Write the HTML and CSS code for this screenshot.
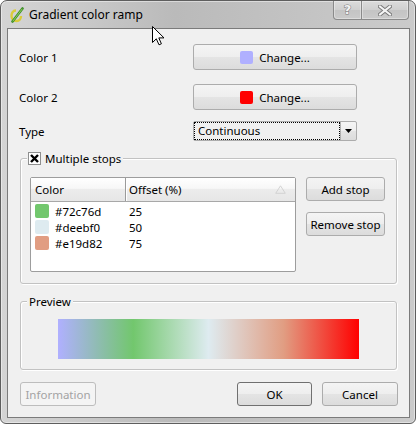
FILE: index.html
```html
<!DOCTYPE html>
<html>
<head>
<meta charset="utf-8">
<link rel="stylesheet" href="styles.css">
</head>
<body>
<div class="window">
  <div class="titlebar">
    <svg class="appicon" width="14" height="16" viewBox="0 0 14 16">
      <path d="M6 3.5 C2.5 3.5 1.5 6.5 1.5 9 C1.5 12 3.5 14 6.5 14 C9.5 14 11 11.5 11 9" fill="none" stroke="#d9cc3a" stroke-width="2.4"/>
      <path d="M2.5 14.5 L12.5 1.5" stroke="#3f8f2a" stroke-width="2.6" stroke-linecap="round"/>
      <path d="M3 14 L12 2.2" stroke="#8fd25a" stroke-width="1" stroke-linecap="round"/>
    </svg>
    <span class="title">Gradient color ramp</span>
    <div class="caption">
      <div class="cbtn help">?</div>
      <div class="cbtn close">
        <svg width="14" height="11" viewBox="0 0 14 11">
          <path d="M2 1.5 L12 9.5 M12 1.5 L2 9.5" stroke="#7a7a7a" stroke-width="4" stroke-linecap="square"/>
          <path d="M2 1.5 L12 9.5 M12 1.5 L2 9.5" stroke="#f4f4f4" stroke-width="2" stroke-linecap="square"/>
        </svg>
      </div>
    </div>
  </div>

  <div class="client">
    <div class="form-row">
      <span class="label">Color 1</span>
      <button class="btn change"><span class="swatch" style="background:#b0b0ff"></span>Change...</button>
    </div>
    <div class="form-row second">
      <span class="label">Color 2</span>
      <button class="btn change"><span class="swatch" style="background:#ff0000"></span>Change...</button>
    </div>
    <div class="form-row third">
      <span class="label">Type</span>
      <div class="combo">
        <span class="combo-text">Continuous</span>
        <span class="combo-arrow">
          <svg width="7" height="4" viewBox="0 0 7 4"><path d="M0 0 H7 L3.5 4 Z" fill="#000"/></svg>
        </span>
      </div>
    </div>

    <div class="group stops">
      <div class="group-title">
        <svg class="checkbox" width="13" height="13" viewBox="0 0 13 13">
          <rect x="0.5" y="0.5" width="12" height="12" fill="#fff" stroke="#8e8f8f"/>
          <path d="M3 3 L10 10 M10 3 L3 10" stroke="#000" stroke-width="2.4"/>
        </svg>
        <span>Multiple stops</span>
      </div>
      <div class="group-body">
        <div class="table">
          <div class="thead">
            <div class="th th1">Color</div>
            <div class="th th2">Offset (%)
              <svg class="sort" width="11" height="9" viewBox="0 0 11 9"><path d="M5.5 0.8 L10.3 8.3 H0.7 Z" fill="none" stroke="#d2d2d2"/></svg>
            </div>
          </div>
          <div class="tbody">
            <div class="tr"><div class="td td1"><span class="cell-swatch" style="background:#72c76d"></span>#72c76d</div><div class="td td2">25</div></div>
            <div class="tr"><div class="td td1"><span class="cell-swatch" style="background:#deebf0"></span>#deebf0</div><div class="td td2">50</div></div>
            <div class="tr"><div class="td td1"><span class="cell-swatch" style="background:#e19d82"></span>#e19d82</div><div class="td td2">75</div></div>
          </div>
        </div>
        <div class="side-btns">
          <button class="btn side">Add stop</button>
          <button class="btn side">Remove stop</button>
        </div>
      </div>
    </div>

    <div class="group preview">
      <div class="group-title"><span class="ptitle">Preview</span></div>
      <div class="ramp"></div>
    </div>

    <div class="footer">
      <button class="btn info" disabled>Information</button>
      <button class="btn ok">OK</button>
      <button class="btn cancel">Cancel</button>
    </div>
  </div>

  <svg class="cursor" width="13" height="20" viewBox="0 0 13 20">
    <path d="M0.5 0.5 L0.5 16.5 L4.3 12.8 L7 18.8 L9.4 17.8 L6.8 11.9 L12 11.9 Z" fill="#fff" stroke="#000" stroke-width="1" stroke-linejoin="miter"/>
  </svg>
</div>
</body>
</html>
```

FILE: styles.css
```css
* { box-sizing: border-box; }

body {
  margin: 0;
  background: #ffffff;
  font-family: "Noto Sans", "Open Sans", sans-serif;
  font-size: 11.5px;
  color: #000;
}

.window {
  position: relative;
  width: 416px;
  height: 424px;
  border: 1px solid #5e5e5e;
  border-radius: 7px 7px 6px 6px;
  background: linear-gradient(to right, #d4d4d4 0%, #cacaca 18%, #bababa 42%, #c1c1c1 65%, #cbcbcb 100%);
  box-shadow: inset 0 0 0 1px rgba(255,255,255,0.45);
  display: flex;
  flex-direction: column;
  overflow: hidden;
}

.titlebar {
  height: 27px;
  display: flex;
  align-items: flex-start;
}

.appicon {
  margin: 6px 0 0 9px;
  flex: none;
}

.title {
  margin: 5px 0 0 5px;
  font-size: 12px;
  line-height: 18px;
  color: #000;
}

.caption {
  margin-left: auto;
  margin-right: 6px;
  display: flex;
}

.cbtn {
  height: 19px;
  border: 1px solid #8a8a8a;
  border-top: none;
  background: linear-gradient(#dcdcdc, #cfcfcf 50%, #c4c4c4 51%, #cacaca);
  box-shadow: inset 0 0 0 1px rgba(255,255,255,0.35);
  display: flex;
  align-items: center;
  justify-content: center;
}

.help {
  width: 29px;
  border-radius: 0 0 0 4px;
  font-family: "DejaVu Sans", sans-serif;
  font-weight: bold;
  font-size: 13px;
  color: #f2f2f2;
  -webkit-text-stroke: 1px #7a7a7a;
  paint-order: stroke fill;
  line-height: 16px;
}

.close {
  width: 47px;
  border-left: none;
  border-radius: 0 0 4px 0;
}

.client {
  margin: 0 5px 5px 6px;
  height: 390px;
  border: 1px solid #7b7b7b;
  background: #f0f0f0;
  padding: 15px 0 11px 11px;
  display: flex;
  flex-direction: column;
}

.form-row {
  display: flex;
  align-items: center;
  height: 26px;
}

.form-row.second { margin-top: 14px; }
.form-row.third { margin-top: 11px; height: 20px; }

.label {
  width: 174px;
}

.btn {
  font: inherit;
  color: #000;
  border: 1px solid #acacac;
  border-radius: 3px;
  background: linear-gradient(#f4f4f4 0%, #eeeeee 50%, #e4e4e4 51%, #dcdcdc 100%);
  padding: 0;
  display: flex;
  align-items: center;
  justify-content: center;
}

.change {
  width: 164px;
  height: 26px;
}

.swatch {
  width: 13px;
  height: 13px;
  border-radius: 2px;
  margin-right: 6px;
}

.combo {
  width: 164px;
  height: 20px;
  border: 1px solid #acacac;
  border-radius: 2px;
  background: linear-gradient(#f4f4f4 0%, #eeeeee 50%, #e4e4e4 51%, #dcdcdc 100%);
  display: flex;
}

.combo-text {
  flex: 1;
  border: 1px dotted #000;
  padding-left: 3px;
  line-height: 16px;
  background: #f0f0f0;
}

.combo-arrow {
  width: 16px;
  border-left: 1px solid #b0b0b0;
  display: flex;
  align-items: center;
  justify-content: center;
}

.group {
  margin-left: 1px;
  margin-right: 12px;
  border: 1px solid #c2c2c2;
  border-radius: 3px;
  box-shadow: 1px 1px 0 #ffffff inset, 1px 1px 0 #ffffff;
}

.stops {
  margin-top: 17px;
  padding-bottom: 11px;
}

.group-title {
  display: flex;
  align-items: center;
  height: 14px;
  margin-top: -8px;
  margin-left: 6px;
  padding: 0 2px 0 1px;
  background: #f0f0f0;
  width: fit-content;
}

.checkbox {
  margin-right: 4px;
}

.group-body {
  display: flex;
  margin-top: 12px;
  padding: 0 9px 0 9px;
}

.table {
  width: 266px;
  height: 95px;
  border: 1px solid #9d9d9d;
  border-radius: 2px;
  background: #fff;
  display: flex;
  flex-direction: column;
}

.thead {
  display: flex;
  height: 24px;
  border-bottom: 1px solid #a8a8a8;
  background: linear-gradient(#ffffff 0%, #f7f7f7 45%, #ececec 50%, #e6e6e6 100%);
}

.th {
  display: flex;
  align-items: center;
}

.th1 {
  width: 95px;
  padding-left: 4px;
  border-right: 1px solid #9a9a9a;
  box-shadow: 1px 0 0 #ffffff;
}

.th2 {
  flex: 1;
  padding-left: 3px;
}

.sort {
  margin-left: auto;
  margin-right: 9px;
}

.tbody {
  padding-top: 1px;
}

.tr {
  display: flex;
  height: 16px;
  align-items: center;
}

.td1 {
  width: 96px;
  padding-left: 4px;
  display: flex;
  align-items: center;
}

.td2 {
  padding-left: 2px;
}

.cell-swatch {
  width: 14px;
  height: 14px;
  border-radius: 2px;
  margin-right: 6px;
}

.side-btns {
  margin-left: 10px;
  display: flex;
  flex-direction: column;
  gap: 11px;
}

.side {
  width: 79px;
  height: 24px;
}

.preview {
  margin-top: 17px;
  padding-bottom: 10px;
}

.ptitle {
  padding-left: 1px;
}

.ramp {
  width: 301px;
  height: 40px;
  margin: 11px auto 0;
  background: linear-gradient(to right, #b0b0ff 0%, #72c76d 25%, #deebf0 50%, #e19d82 75%, #ff0000 100%);
}

.footer {
  display: flex;
  margin-top: 12px;
  margin-right: 11px;
  margin-left: 1px;
}

.footer .btn {
  height: 24px;
}

.info {
  width: 76px;
  color: #a3a3a3;
  border-color: #bdbdbd;
  background: #f4f4f4;
}

.ok {
  width: 75px;
  margin-left: auto;
  border-color: #707070;
}

.cancel {
  width: 76px;
  margin-left: 10px;
}

.cursor {
  position: absolute;
  left: 151px;
  top: 25px;
}
```
